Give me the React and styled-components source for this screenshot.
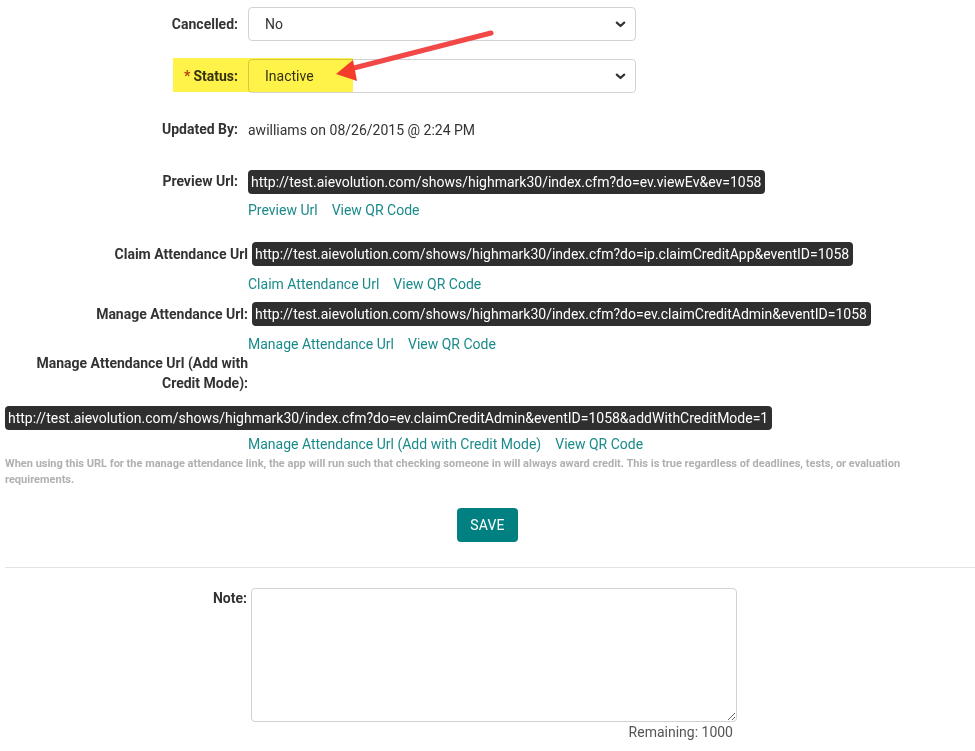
import React from "react";
import styled, { createGlobalStyle } from "styled-components";

const GlobalStyle = createGlobalStyle`
  html, body { margin: 0; padding: 0; background: #fff; }
  body {
    font-family: Roboto, "Liberation Sans", Arial, sans-serif;
    font-size: 14px;
    color: #333;
  }
  * { box-sizing: border-box; }
`;

const Page = styled.div`
  position: relative;
  width: 975px;
  padding: 7px 0 0 5px;
`;

const FieldRow = styled.div`
  position: relative;
  display: grid;
  grid-template-columns: 233px ${(p) => p.$controlWidth || 388}px;
  column-gap: 10px;
  align-items: ${(p) => p.$align || "center"};
  margin-top: ${(p) => p.$mt || 0}px;
`;

const Label = styled.div`
  text-align: right;
  font-weight: 700;
  line-height: ${(p) => p.$lh || 20}px;
  color: #333;
`;

const Req = styled.span`
  color: #b8403a;
  margin-right: 3px;
`;

const SelectBox = styled.div`
  display: flex;
  align-items: center;
  justify-content: space-between;
  height: 34px;
  padding: 0 9px 0 16px;
  border: 1px solid #d2d2d2;
  border-radius: 4px;
  background: #fff;
  color: #333;
  font-size: 14px;
`;

const Value = styled.div`
  line-height: 20px;
  color: #333;
  margin-top: 1px;
`;

const UrlCode = styled.span`
  display: inline-block;
  background: #2f2f2f;
  color: #fff;
  padding: 2px 4px 2px 3px;
  border-radius: 4px;
  line-height: 20px;
  font-size: 14px;
  white-space: nowrap;
`;

const Links = styled.div`
  display: flex;
  gap: 14px;
  line-height: 20px;
  margin-top: ${(p) => p.$mt || 6}px;
  margin-left: ${(p) => p.$ml || 0}px;
`;

const Link = styled.a`
  color: #1b8a8a;
  text-decoration: none;
  cursor: pointer;
`;

const InlineRow = styled.div`
  display: flex;
  flex-wrap: wrap;
  align-items: center;
  column-gap: 4px;
  row-gap: ${(p) => p.$rowGap || 0}px;
  margin-top: ${(p) => p.$mt || 0}px;
`;

const InlineLabel = styled.div`
  width: 243px;
  text-align: right;
  font-weight: 700;
  line-height: ${(p) => p.$lh || 20}px;
`;

const Help = styled.div`
  margin-top: 2px;
  font-size: 11px;
  font-weight: 700;
  line-height: 16px;
  color: #b0b0b0;
  padding-right: 20px;
`;

const ButtonBar = styled.div`
  display: flex;
  justify-content: center;
  margin-top: 20px;
  padding-right: 5px;
`;

const SaveButton = styled.button`
  height: 34px;
  padding: 0 13px;
  background: #008080;
  color: #fff;
  border: none;
  border-radius: 4px;
  font-family: inherit;
  font-size: 14px;
  letter-spacing: 0.2px;
`;

const Divider = styled.hr`
  margin: 25px 0 0 0;
  border: none;
  border-top: 1px solid #e3e3e3;
  height: 0;
`;

const NoteRow = styled.div`
  display: grid;
  grid-template-columns: 242px 486px;
  column-gap: 4px;
  margin-top: 20px;
`;

const NoteArea = styled.textarea`
  display: block;
  width: 486px;
  height: 134px;
  border: 1px solid #d2d2d2;
  border-radius: 4px;
  resize: vertical;
  font-family: inherit;
  font-size: 14px;
`;

const Remaining = styled.div`
  text-align: right;
  padding-right: 4px;
  line-height: 20px;
  color: #555;
`;

const Highlight = styled.div`
  position: absolute;
  left: 168px;
  top: -1px;
  width: 180px;
  height: 34px;
  background: #fff34a;
  mix-blend-mode: multiply;
  pointer-events: none;
`;

const ArrowLayer = styled.svg`
  position: absolute;
  left: 330px;
  top: 20px;
  width: 170px;
  height: 65px;
  overflow: visible;
  pointer-events: none;
`;

const Chevron = () => (
  <svg width="11" height="7" viewBox="0 0 11 7">
    <path d="M1.8 1.6 L5.5 5 L9.2 1.6" fill="none" stroke="#333" strokeWidth="2.2" strokeLinecap="round" strokeLinejoin="round" />
  </svg>
);

const Select = ({ value }) => (
  <SelectBox>
    <span>{value}</span>
    <Chevron />
  </SelectBox>
);

export default function App() {
  return (
    <>
      <GlobalStyle />
      <Page>
        <FieldRow>
          <Label>Cancelled:</Label>
          <Select value="No" />
        </FieldRow>

        <FieldRow $mt={18}>
          <Label>
            <Req>*</Req>Status:
          </Label>
          <Select value="Inactive" />
          <Highlight />
        </FieldRow>

        <FieldRow $mt={26} $align="start">
          <Label>Updated By:</Label>
          <Value>awilliams on 08/26/2015 @ 2:24 PM</Value>
        </FieldRow>

        <FieldRow $mt={30} $align="start" $controlWidth={700}>
          <Label $lh={23}>Preview Url:</Label>
          <div>
            <UrlCode>http://test.aievolution.com/shows/highmark30/index.cfm?do=ev.viewEv&amp;ev=1058</UrlCode>
            <Links>
              <Link>Preview Url</Link>
              <Link>View QR Code</Link>
            </Links>
          </div>
        </FieldRow>

        <InlineRow $mt={22}>
          <InlineLabel>Claim Attendance Url</InlineLabel>
          <UrlCode>http://test.aievolution.com/shows/highmark30/index.cfm?do=ip.claimCreditApp&amp;eventID=1058</UrlCode>
        </InlineRow>
        <Links $mt={8} $ml={243}>
          <Link>Claim Attendance Url</Link>
          <Link>View QR Code</Link>
        </Links>

        <InlineRow $mt={8}>
          <InlineLabel>Manage Attendance Url:</InlineLabel>
          <UrlCode>http://test.aievolution.com/shows/highmark30/index.cfm?do=ev.claimCreditAdmin&amp;eventID=1058</UrlCode>
        </InlineRow>
        <Links $mt={8} $ml={243}>
          <Link>Manage Attendance Url</Link>
          <Link>View QR Code</Link>
        </Links>

        <InlineRow $rowGap={13}>
          <InlineLabel $lh={19.5}>Manage Attendance Url (Add with Credit Mode):</InlineLabel>
          <UrlCode>http://test.aievolution.com/shows/highmark30/index.cfm?do=ev.claimCreditAdmin&amp;eventID=1058&amp;addWithCreditMode=1</UrlCode>
        </InlineRow>
        <Links $mt={4} $ml={243}>
          <Link>Manage Attendance Url (Add with Credit Mode)</Link>
          <Link>View QR Code</Link>
        </Links>
        <Help>
          When using this URL for the manage attendance link, the app will run such that checking someone in will always award credit. This is true regardless of deadlines, tests, or evaluation requirements.
        </Help>

        <ButtonBar>
          <SaveButton>SAVE</SaveButton>
        </ButtonBar>

        <Divider />

        <NoteRow>
          <Label>Note:</Label>
          <div>
            <NoteArea />
            <Remaining>Remaining: 1000</Remaining>
          </div>
        </NoteRow>

        <ArrowLayer viewBox="330 20 170 65">
          <line x1="491" y1="33" x2="350" y2="69" stroke="#f24848" strokeWidth="5" strokeLinecap="round" />
          <polygon points="336,74 353,60 357,81" fill="#f33c2a" />
        </ArrowLayer>
      </Page>
    </>
  );
}
